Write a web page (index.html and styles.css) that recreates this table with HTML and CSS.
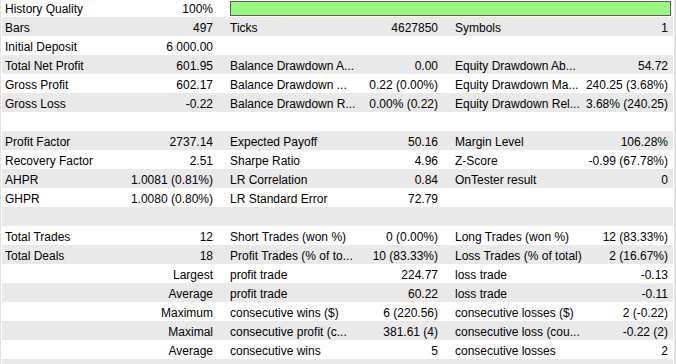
FILE: index.html
```html
<!DOCTYPE html>
<html>
<head>
<meta charset="utf-8">
<link rel="stylesheet" href="styles.css">
</head>
<body>
<div class="frame">
  <div class="list">
    <div class="row">
      <div class="cell"><span class="lbl">History Quality</span><span class="val">100%</span></div>
      <div class="barcell"><div class="bar"></div></div>
    </div>
    <div class="row">
      <div class="cell"><span class="lbl">Bars</span><span class="val">497</span></div>
      <div class="cell"><span class="lbl">Ticks</span><span class="val">4627850</span></div>
      <div class="cell last"><span class="lbl">Symbols</span><span class="val">1</span></div>
    </div>
    <div class="row">
      <div class="cell"><span class="lbl">Initial Deposit</span><span class="val">6 000.00</span></div>
      <div class="cell"></div>
      <div class="cell last"></div>
    </div>
    <div class="row">
      <div class="cell"><span class="lbl">Total Net Profit</span><span class="val">601.95</span></div>
      <div class="cell"><span class="lbl">Balance Drawdown A...</span><span class="val">0.00</span></div>
      <div class="cell last"><span class="lbl">Equity Drawdown Ab...</span><span class="val">54.72</span></div>
    </div>
    <div class="row">
      <div class="cell"><span class="lbl">Gross Profit</span><span class="val">602.17</span></div>
      <div class="cell"><span class="lbl">Balance Drawdown ...</span><span class="val">0.22 (0.00%)</span></div>
      <div class="cell last"><span class="lbl">Equity Drawdown Ma...</span><span class="val">240.25 (3.68%)</span></div>
    </div>
    <div class="row">
      <div class="cell"><span class="lbl">Gross Loss</span><span class="val">-0.22</span></div>
      <div class="cell"><span class="lbl">Balance Drawdown R...</span><span class="val">0.00% (0.22)</span></div>
      <div class="cell last"><span class="lbl">Equity Drawdown Rel...</span><span class="val">3.68% (240.25)</span></div>
    </div>
    <div class="row"></div>
    <div class="row">
      <div class="cell"><span class="lbl">Profit Factor</span><span class="val">2737.14</span></div>
      <div class="cell"><span class="lbl">Expected Payoff</span><span class="val">50.16</span></div>
      <div class="cell last"><span class="lbl">Margin Level</span><span class="val">106.28%</span></div>
    </div>
    <div class="row">
      <div class="cell"><span class="lbl">Recovery Factor</span><span class="val">2.51</span></div>
      <div class="cell"><span class="lbl">Sharpe Ratio</span><span class="val">4.96</span></div>
      <div class="cell last"><span class="lbl">Z-Score</span><span class="val">-0.99 (67.78%)</span></div>
    </div>
    <div class="row">
      <div class="cell"><span class="lbl">AHPR</span><span class="val">1.0081 (0.81%)</span></div>
      <div class="cell"><span class="lbl">LR Correlation</span><span class="val">0.84</span></div>
      <div class="cell last"><span class="lbl">OnTester result</span><span class="val">0</span></div>
    </div>
    <div class="row">
      <div class="cell"><span class="lbl">GHPR</span><span class="val">1.0080 (0.80%)</span></div>
      <div class="cell"><span class="lbl">LR Standard Error</span><span class="val">72.79</span></div>
      <div class="cell last"></div>
    </div>
    <div class="row"></div>
    <div class="row">
      <div class="cell"><span class="lbl">Total Trades</span><span class="val">12</span></div>
      <div class="cell"><span class="lbl">Short Trades (won %)</span><span class="val">0 (0.00%)</span></div>
      <div class="cell last"><span class="lbl">Long Trades (won %)</span><span class="val">12 (83.33%)</span></div>
    </div>
    <div class="row">
      <div class="cell"><span class="lbl">Total Deals</span><span class="val">18</span></div>
      <div class="cell"><span class="lbl">Profit Trades (% of to...</span><span class="val">10 (83.33%)</span></div>
      <div class="cell last"><span class="lbl">Loss Trades (% of total)</span><span class="val">2 (16.67%)</span></div>
    </div>
    <div class="row">
      <div class="cell"><span class="lbl"></span><span class="val">Largest</span></div>
      <div class="cell"><span class="lbl">profit trade</span><span class="val">224.77</span></div>
      <div class="cell last"><span class="lbl">loss trade</span><span class="val">-0.13</span></div>
    </div>
    <div class="row">
      <div class="cell"><span class="lbl"></span><span class="val">Average</span></div>
      <div class="cell"><span class="lbl">profit trade</span><span class="val">60.22</span></div>
      <div class="cell last"><span class="lbl">loss trade</span><span class="val">-0.11</span></div>
    </div>
    <div class="row">
      <div class="cell"><span class="lbl"></span><span class="val">Maximum</span></div>
      <div class="cell"><span class="lbl">consecutive wins ($)</span><span class="val">6 (220.56)</span></div>
      <div class="cell last"><span class="lbl">consecutive losses ($)</span><span class="val">2 (-0.22)</span></div>
    </div>
    <div class="row">
      <div class="cell"><span class="lbl"></span><span class="val">Maximal</span></div>
      <div class="cell"><span class="lbl">consecutive profit (c...</span><span class="val">381.61 (4)</span></div>
      <div class="cell last"><span class="lbl">consecutive loss (cou...</span><span class="val">-0.22 (2)</span></div>
    </div>
    <div class="row">
      <div class="cell"><span class="lbl"></span><span class="val">Average</span></div>
      <div class="cell"><span class="lbl">consecutive wins</span><span class="val">5</span></div>
      <div class="cell last"><span class="lbl">consecutive losses</span><span class="val">2</span></div>
    </div>
    <div class="row"></div>
  </div>
</div>
</body>
</html>
```

FILE: styles.css
```css
html, body {
  margin: 0;
  padding: 0;
  background: #ffffff;
  overflow: hidden;
}
.frame {
  width: 676px;
  height: 364px;
  box-sizing: border-box;
  border-left: 1px solid #e2e2e2;
  border-right: 2px solid #e2e2e2;
  padding: 0 1px 0 1px;
  overflow: hidden;
  font-family: "Liberation Sans", Arial, sans-serif;
  font-size: 12px;
  color: #000;
}
.list {
  display: flex;
  flex-direction: column;
  margin-top: -2px;
}
.row {
  height: 19px;
  flex: none;
  display: grid;
  grid-template-columns: 225px 225px 1fr;
  white-space: nowrap;
}
.row:nth-child(even) {
  background: #e9e9e9;
}
.cell {
  display: flex;
  justify-content: space-between;
  padding: 3px 14px 0 3px;
  line-height: 16px;
  min-width: 0;
}
.cell.last {
  padding-right: 5px;
}
.lbl, .val {
  white-space: nowrap;
}
.barcell {
  grid-column: 2 / 4;
  padding: 3px 2px 1px 3px;
  display: flex;
}
.bar {
  flex: 1;
  background: #98f882;
  border: 1px solid #5c5c5c;
}
```
